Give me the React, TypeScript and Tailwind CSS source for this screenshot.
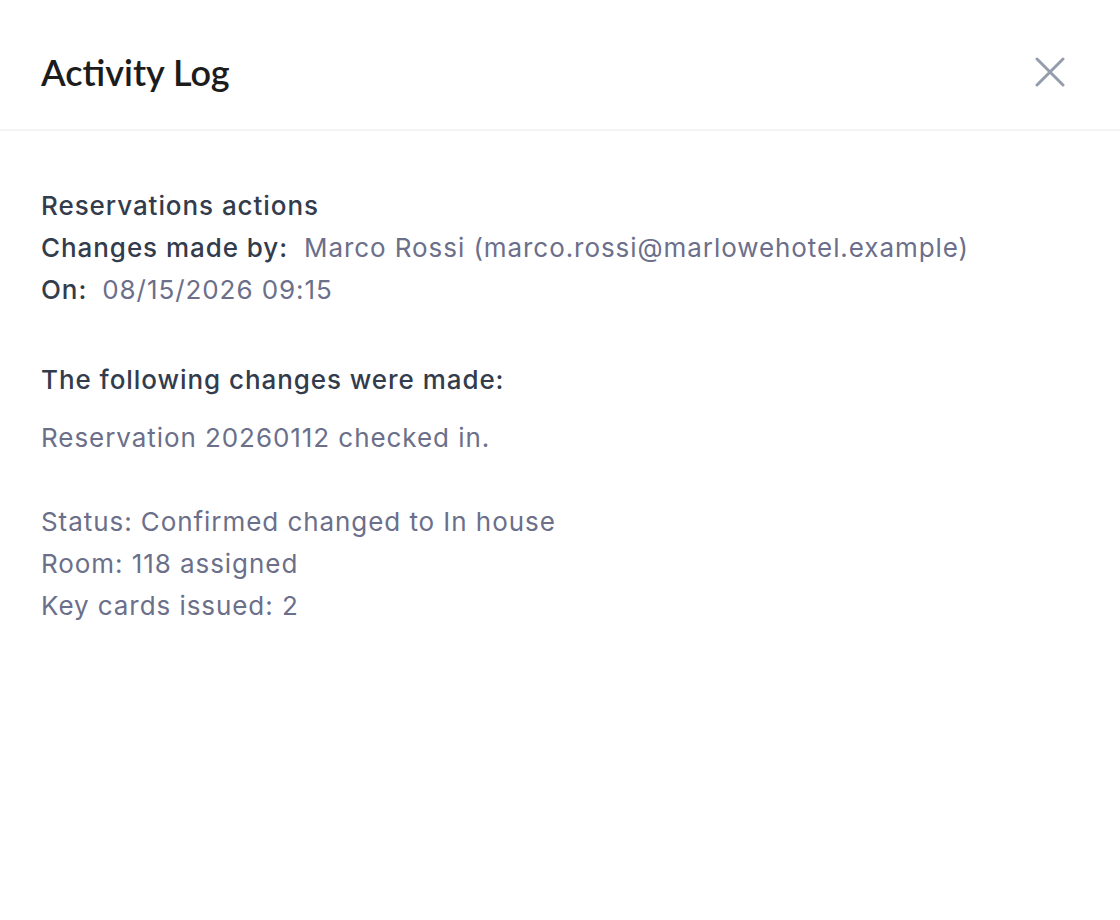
import React from "react";

export default function App() {
  return (
    <div className="w-[1120px] h-[920px] bg-white" style={{ fontFamily: "Inter, 'Noto Sans', sans-serif" }}>
      <div className="h-[131px] pt-[15px] flex items-center justify-between pl-[41px] pr-[55px] border-b-2 border-[#f3f4f6]">
        <h1 className="text-[36px] font-semibold text-[#1c1c1c] leading-none" style={{ fontFamily: "Lato, sans-serif" }}>
          Activity Log
        </h1>
        <button className="w-[30px] h-[30px] flex items-center justify-center text-[#959cab]">
          <svg width="30" height="30" viewBox="0 0 30 30" fill="none" stroke="currentColor" strokeWidth="3" strokeLinecap="round">
            <path d="M2 2 28 28M28 2 2 28" />
          </svg>
        </button>
      </div>
      <div className="pl-[41px] pt-[54px] text-[26px] leading-[42px] tracking-[0.036em]">
        <div className="font-medium text-[#333c4c]">Reservations actions</div>
        <div>
          <span className="font-medium text-[#333c4c]">Changes made by:</span>
          <span className="text-[#6b6f8a] ml-[16px]">Marco Rossi (marco.rossi@marlowehotel.example)</span>
        </div>
        <div>
          <span className="font-medium text-[#333c4c]">On:</span>
          <span className="text-[#6b6f8a] ml-[15px]">08/15/2026 09:15</span>
        </div>
        <div className="mt-[48px] font-medium text-[#333c4c]">The following changes were made:</div>
        <div className="mt-[16px] text-[#6b6f8a]">
          <div>Reservation 20260112 checked in.</div>
          <div className="h-[42px]" />
          <div>Status: Confirmed changed to In house</div>
          <div>Room: 118 assigned</div>
          <div>Key cards issued: 2</div>
        </div>
      </div>
    </div>
  );
}
